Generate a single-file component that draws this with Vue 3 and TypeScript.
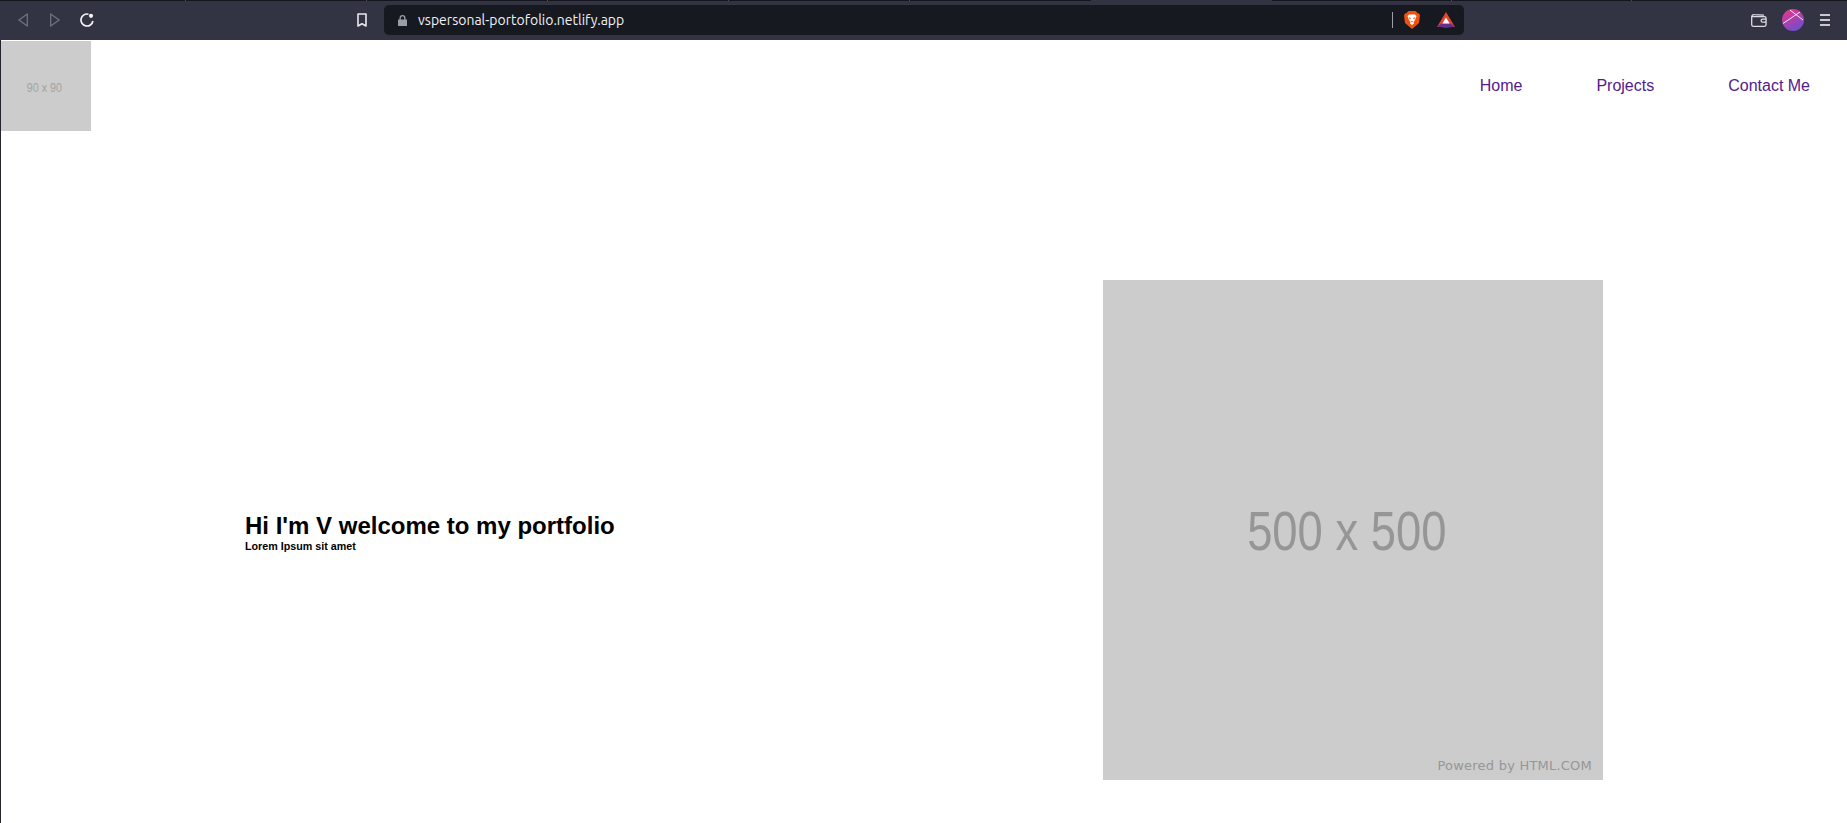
<script setup lang="ts">
const tabs = [186, 181, 181, 181, 181, 181, 181, 180, 180, 215]
const activeTab = 6
const navLinks = ['Home', 'Projects', 'Contact Me']
</script>

<template>
  <div class="window">
    <div class="tabstrip">
      <span
        v-for="(w, i) in tabs"
        :key="i"
        class="tab"
        :class="{ active: i === activeTab, 'before-active': i === activeTab - 1, last: i === tabs.length - 1 }"
        :style="{ width: w + 'px' }"
      ></span>
    </div>
    <div class="toolbar">
      <svg class="nav-icon" viewBox="0 0 10 14" fill="none" stroke="#6e717e" stroke-width="1.300"><path d="M9.300 1 .9 7l8.400 6z" stroke-linejoin="round" /></svg>
      <svg class="nav-icon fwd" viewBox="0 0 10 14" fill="none" stroke="#6e717e" stroke-width="1.300"><path d="M.7 1l8.400 6-8.400 6z" stroke-linejoin="round" /></svg>
      <svg class="reload" viewBox="0 0 14 14" fill="none" stroke="#f4f4f6" stroke-width="1.700"><path d="M8.500 1.200A6 6 0 1 0 12.900 8" /><circle cx="11" cy="2.800" r="2.100" fill="#f4f4f6" stroke="none" /></svg>
      <svg class="nav-icon bookmark" viewBox="0 0 10 14" fill="none" stroke="#e8e8ec" stroke-width="1.600"><path d="M1 1h8v12L5 10.800 1 13z" stroke-linejoin="round" /></svg>
      <div class="urlbar">
        <svg class="lock" viewBox="0 0 9 11"><path d="M1.500 4.500V3a3 3 0 0 1 6 0v1.500H9V11H0V4.500zM2.800 4.500h3.400V3a1.700 1.700 0 0 0-3.400 0z" fill="#9a9ca6" fill-rule="evenodd" /></svg>
        <span class="url">vspersonal-portofolio.netlify.app</span>
        <span class="url-sep"></span>
        <svg class="shield" viewBox="0 0 16 18">
          <path d="M4.500 0h7L13.500 2 15 2.500l1 2-1 7.500L8 18 1 12 0 4.500l1-2L2.500 2z" fill="#f1500f" />
          <path d="M3.500 5 5 3.500h6L12.500 5 11 9 9.500 11l.5 1.500L8 14l-2-1.500.5-1.500L5 9z" fill="#fff" />
          <path d="M4.800 6.200 7 7 5.800 8.500zM11.200 6.200 9 7l1.200 1.500zM6.800 10h2.400L8 11.500z" fill="#f1500f" />
        </svg>
        <svg class="bat" viewBox="0 0 18 16">
          <path d="M9 0 18 15H0z" fill="#e2452d" />
          <path d="M0 14.500 4.800 11.500h8.400L18 14.500 9 16z" fill="#662d91" />
          <path d="M9 5.500 12.600 11.500H5.400z" fill="#fff" />
        </svg>
      </div>
      <svg class="wallet" viewBox="0 0 16 13" fill="none" stroke="#dcdce2" stroke-width="1.300"><path d="M13 1.200 3 .7A2 2 0 0 0 .7 2.700v8A1.700 1.700 0 0 0 2.400 12.300h11a1.700 1.700 0 0 0 1.700-1.700V4.400a1.700 1.700 0 0 0-1.700-1.700H.9" /><path d="M15 5.200h-3.400a1.500 1.500 0 0 0 0 3H15" /></svg>
      <svg class="avatar" viewBox="0 0 22 22">
        <defs>
          <linearGradient id="avatar-grad" x1="0.2" y1="0" x2="0.7" y2="1">
            <stop offset="0" stop-color="#e8348a" />
            <stop offset="1" stop-color="#6c4fd0" />
          </linearGradient>
        </defs>
        <circle cx="11" cy="11" r="11" fill="url(#avatar-grad)" />
        <path d="M1 14.500 18 3M8 1l13 10" stroke="#f4eaf4" stroke-width="1" fill="none" />
      </svg>
      <div class="menu"><i></i><i></i><i></i></div>
    </div>
    <div class="page">
      <header class="site-header">
        <div class="ph logo"><span>90 x 90</span></div>
        <nav class="site-nav">
          <a v-for="link in navLinks" :key="link" href="#" @click.prevent>{{ link }}</a>
        </nav>
      </header>
      <main class="hero">
        <div class="intro">
          <h1>Hi I'm V welcome to my portfolio</h1>
          <p>Lorem Ipsum sit amet</p>
        </div>
        <div class="ph hero-img">
          <span>500 x 500</span>
          <small>Powered by HTML.COM</small>
        </div>
      </main>
    </div>
  </div>
</template>

<style scoped>
.window {
  width: 1847px;
  height: 823px;
  overflow: hidden;
  display: flex;
  flex-direction: column;
  font-family: "Liberation Sans", Arial, sans-serif;
}

.tabstrip {
  height: 1px;
  background: #15161d;
  display: flex;
}

.tab {
  box-sizing: border-box;
  flex-shrink: 0;
  border-right: 1px solid #4a4c58;
}

.tab.active {
  background: #323443;
  border-right: 0;
}

.tab.before-active,
.tab.last {
  border-right: 0;
}

.toolbar {
  height: 39px;
  background: #323443;
  display: flex;
  align-items: center;
  padding: 0 17px 1px 18px;
  box-sizing: border-box;
}

.nav-icon {
  width: 10px;
  height: 14px;
  flex-shrink: 0;
}

.fwd {
  margin-left: 22px;
}

.reload {
  width: 14px;
  height: 14px;
  margin-left: 20px;
}

.bookmark {
  margin-left: 263px;
}

.urlbar {
  width: 1080px;
  height: 30px;
  margin-left: 17px;
  background: #171921;
  border-radius: 5px;
  display: flex;
  align-items: center;
  padding: 0 9px 0 14px;
  box-sizing: border-box;
}

.lock {
  width: 9px;
  height: 11px;
}

.url {
  margin-left: 11px;
  font-family: Ubuntu, "Noto Sans", sans-serif;
  font-size: 14px;
  color: #f1f1f3;
  flex: 1;
}

.url-sep {
  width: 1px;
  height: 16px;
  background: #9a9ca6;
  margin-right: 11px;
}

.shield {
  width: 16px;
  height: 18px;
  margin-right: 17px;
}

.bat {
  width: 18px;
  height: 16px;
}

.wallet {
  width: 16px;
  height: 13px;
  margin-left: auto;
}

.avatar {
  width: 22px;
  height: 22px;
  margin-left: 15px;
}

.menu {
  width: 10px;
  margin-left: 16px;
  display: flex;
  flex-direction: column;
  gap: 3px;
}

.menu i {
  display: block;
  height: 2px;
  background: #c8c8ce;
}

.page {
  flex: 1;
  background: #fff;
  border-left: 1px solid #23242e;
}

.site-header {
  display: flex;
  justify-content: space-between;
  padding-top: 1px;
}

.ph {
  background: #ccc;
  color: #969696;
  display: flex;
  align-items: center;
  justify-content: center;
}

.ph span {
  display: inline-block;
  transform: scaleX(0.825);
}

.logo {
  width: 90px;
  height: 90px;
  font-size: 13px;
  color: #a3a3a3;
}

.logo span {
  margin: 2px 3px 0 0;
}

.site-nav {
  display: flex;
  gap: 74px;
  padding: 36px 37px 0 0;
  font-size: 16px;
}

.site-nav a {
  color: #551a8b;
  text-decoration: none;
  height: 18px;
}

.hero {
  display: flex;
  justify-content: space-between;
  align-items: center;
  padding: 149px 244px 0;
}

.intro {
  padding-top: 4px;
}

.intro h1 {
  margin: 0;
  font-size: 24px;
  line-height: 28px;
  color: #000;
}

.intro p {
  margin: 0;
  font-size: 10.72px;
  line-height: 12px;
  font-weight: bold;
  color: #000;
}

.hero-img {
  width: 500px;
  height: 500px;
  font-size: 55px;
  position: relative;
}

.hero-img span {
  margin: 1px 13px 0 0;
}

.hero-img small {
  position: absolute;
  right: 11px;
  bottom: 7px;
  font-family: "DejaVu Sans", sans-serif;
  font-size: 13px;
  letter-spacing: 0.22px;
}
</style>

<style>
html,
body {
  margin: 0;
  background: #fff;
}
</style>
